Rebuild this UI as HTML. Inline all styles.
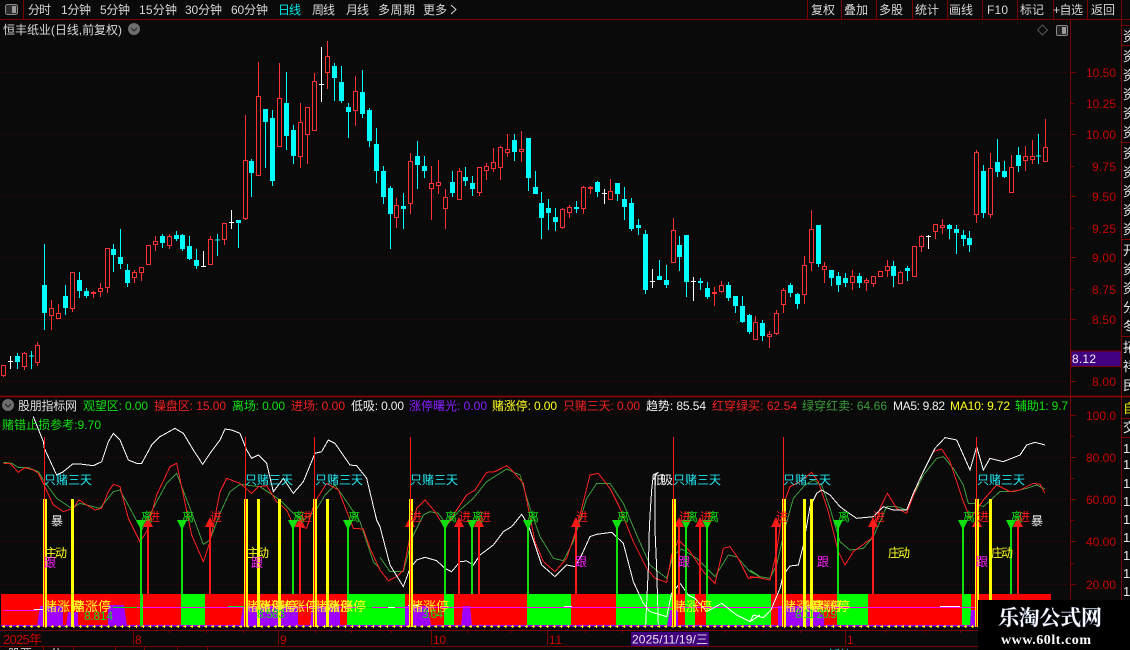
<!DOCTYPE html>
<html lang="zh"><head><meta charset="utf-8"><title>恒丰纸业</title>
<style>
html,body{margin:0;padding:0;background:#0a0a0b;width:1130px;height:650px;overflow:hidden}
svg{display:block}
text{font-family:"Liberation Sans","WenQuanYi Zen Hei","Noto Sans CJK SC",sans-serif;font-size:12px}
.tb text{fill:#d8d8d8;font-size:12px}
.ax text{fill:#c80000;font-size:12px}
.lb text{font-size:12px}
.rc text{fill:#e8e8e8;font-size:13px}
</style></head><body>
<svg width="1130" height="650" viewBox="0 0 1130 650" xmlns="http://www.w3.org/2000/svg">
<rect width="1130" height="650" fill="#0a0a0b"/>
<!-- grid -->
<g stroke="#640000" stroke-width="1" stroke-dasharray="1 3" fill="none">
<path d="M1 72.5H1068M1 134.5H1068M1 196.5H1068M1 257.5H1068M1 319.5H1068M1 381.5H1068"/>
<path d="M1 457.5H1068M1 499.5H1068M1 541.5H1068M1 584.5H1068"/>
</g>
<!-- toolbar -->
<g stroke="#7a0000" stroke-width="1" fill="none">
<path d="M0 19.5H1130M23.5 0V19M807.5 0V19M841.5 0V19M876.5 0V19M912.5 0V19M947.5 0V19M982.5 0V19M1017.5 0V19M1053.5 0V19M1087.5 0V19M1121.5 0V19"/>
<path d="M1070.5 20V646M1121.5 20V646"/>
<path d="M0 396.5H1130" stroke="#900000" stroke-width="1.4"/>
<path d="M1122 25.5H1130M1122 45.5H1130M1122 142.5H1130M1122 239.5H1130M1122 336.5H1130M1122 418.5H1130M1122 437.5H1130"/>
<path d="M0 630.5H1130M0 646.5H1130"/>
<path d="M43.5 646V650M73.5 646V650M115.5 646V650M144.5 646V650M177.5 646V650M207.5 646V650M133.5 630V645M278.5 630V645M431.5 630V645M547.5 630V645M845.5 630V645"/>
<path d="M169.5 630V633M206.5 630V633M243.5 630V633M315.5 630V633M351.5 630V633M391.5 630V633M467.5 630V633M510.5 630V633M585.5 630V633M622.5 630V633M725.5 630V633M762.5 630V633M800.5 630V633M885.5 630V633M925.5 630V633M960.5 630V633"/>
<path d="M1071 72.5H1076M1071 103.5H1074M1071 134.5H1076M1071 166.5H1074M1071 196.5H1076M1071 228.5H1074M1071 257.5H1076M1071 289.5H1074M1071 319.5H1076M1071 381.5H1076M1071 415.5H1076M1071 436.5H1074M1071 457.5H1076M1071 478.5H1074M1071 499.5H1076M1071 520.5H1074M1071 541.5H1076M1071 563.5H1074M1071 584.5H1076"/>
</g>
<rect x="5.5" y="4.5" width="12" height="10" rx="2" fill="#2c2c2c" stroke="#8a8a8a"/><rect x="12" y="6" width="4" height="7" fill="#9a9a9a"/>
<g class="tb">
<text x="28" y="14" textLength="23">分时</text><text x="61" y="14" textLength="30">1分钟</text><text x="100" y="14" textLength="30">5分钟</text><text x="139" y="14" textLength="38">15分钟</text><text x="185" y="14" textLength="37">30分钟</text><text x="231" y="14" textLength="37">60分钟</text>
<text x="278" y="14" textLength="23" style="fill:#00e8e8">日线</text><text x="312" y="14" textLength="23">周线</text><text x="346" y="14" textLength="23">月线</text><text x="378" y="14" textLength="37">多周期</text><text x="423" y="14" textLength="24">更多</text>
<path d="M451 5l5 4.5-5 4.5" fill="none" stroke="#d8d8d8"/>
<text x="811" y="14" textLength="24">复权</text><text x="844" y="14" textLength="24">叠加</text><text x="879" y="14" textLength="24">多股</text><text x="915" y="14" textLength="24">统计</text><text x="949" y="14" textLength="24">画线</text><text x="987" y="14" textLength="21">F10</text><text x="1020" y="14" textLength="24">标记</text><text x="1053" y="14" textLength="30">+自选</text><text x="1091" y="14" textLength="24">返回</text>
<text x="3" y="34" textLength="119">恒丰纸业(日线,前复权)</text>
</g>
<circle cx="134" cy="29" r="6" fill="#6e6e6e"/><path d="M131 28l3 3 3-3" fill="none" stroke="#222"/>
<path d="M1042.5 25l5 5-5 5-5-5z" fill="none" stroke="#555"/>
<rect x="1056.5" y="25.5" width="11" height="10" rx="1.5" fill="#222" stroke="#8a8a8a"/><rect x="1062" y="27" width="4" height="7" fill="#9a9a9a"/>
<!-- candle wicks -->
<g fill="none" stroke-width="1" shape-rendering="crispEdges">
<path stroke="#00ffff" d="M17.5 353V369M31.5 351V369M29 356H34M44.5 244V330M65.5 285V315M79.5 272V298M86.5 288V298M113.5 244V272M120.5 229V269M127.5 264V287M162.5 234V248M176.5 231V241M182.5 234V251M189.5 236V260M196.5 249V269M217.5 234V256M215 240H220M238.5 220V248M251.5 159V197M265.5 109V168M272.5 110V186M286.5 72V150M293.5 125V164M334.5 63V101M341.5 66V103M348.5 103V138M362.5 70V118M369.5 108V147M376.5 128V183M383.5 166V204M390.5 186V249M403.5 193V229M417.5 141V189M424.5 156V178M452.5 171V197M465.5 167V186M472.5 176V196M514.5 134V161M528.5 138V191M535.5 171V194M541.5 192V239M548.5 199V230M555.5 208V231M576.5 201V213M597.5 181V197M617.5 183V201M624.5 187V220M631.5 198V231M638.5 219V235M645.5 230V294M659.5 260V280M666.5 265V288M679.5 236V271M686.5 235V297M700.5 278V290M707.5 282V299M728.5 282V301M735.5 296V313M742.5 296V323M749.5 314V334M762.5 320V341M790.5 283V297M797.5 293V309M818.5 225V267M831.5 270V286M838.5 272V292M845.5 273V287M859.5 273V288M893.5 261V287M907.5 266V281M949.5 224V239M956.5 225V254M963.5 230V246M969.5 231V252M983.5 165V218M997.5 139V177M1004.5 161V178M1018.5 147V172M1038.5 134V164M1036 156H1041"/>
<path stroke="#ffffff" d="M10.5 356V369M8 361.5H13M203.5 251V267M201 266.5H206M231.5 210V229M229 222.5H234M321.5 47V102M319 84.5H324M604.5 189V204M602 193.5H607M652.5 269V288M650 281.5H655M693.5 277V301M691 281.5H696M928.5 235V249M926 236.5H931"/>
<path stroke="#ff3333" d="M3.5 365V377M24.5 352V370M37.5 342V366M51.5 300V330M58.5 304V319M72.5 272V312M93.5 291V298M100.5 283V297M107.5 248V293M134.5 270V283M141.5 267V281M155.5 236V251M169.5 234V249M210.5 236V265M224.5 223V245M245.5 115V220M258.5 62V176M279.5 63V147M300.5 103V168M307.5 107V164M314.5 73V131M327.5 41V89M355.5 76V126M396.5 198V228M410.5 153V214M431.5 166V220M438.5 160V194M445.5 189V229M459.5 168V200M479.5 167V196M486.5 163V180M493.5 148V172M500.5 146V180M507.5 134V157M521.5 131V162M562.5 208V229M569.5 205V218M583.5 186V214M590.5 186V194M610.5 179V200M673.5 218V263M714.5 287V306M721.5 281V293M755.5 316V340M769.5 331V348M776.5 310V335M783.5 288V313M804.5 256V304M811.5 210V271M824.5 262V283M852.5 270V290M866.5 278V291M873.5 276V287M887.5 260V277M900.5 271V284M921.5 235V252M935.5 224V239M942.5 219V234M976.5 150V223M990.5 153V218M1011.5 155V193M1025.5 146V171M1032.5 140V164M1045.5 119V162"/>
<path fill="#0a0a0b" stroke="#ff3333" d="M1.5 365.5H5.5V375.5H1.5zM22.5 353.5H26.5V366.5H22.5zM35.5 345.5H39.5V362.5H35.5zM49.5 308.5H53.5V315.5H49.5zM56.5 313.5H60.5V318.5H56.5zM70.5 272.5H74.5V308.5H70.5zM98.5 288.5H102.5V291.5H98.5zM105.5 248.5H109.5V287.5H105.5zM132.5 272.5H136.5V277.5H132.5zM139.5 267.5H143.5V272.5H139.5zM146.5 245.5H150.5V264.5H146.5zM153.5 241.5H157.5V244.5H153.5zM167.5 236.5H171.5V245.5H167.5zM208.5 239.5H212.5V264.5H208.5zM222.5 223.5H226.5V239.5H222.5zM243.5 160.5H247.5V218.5H243.5zM256.5 96.5H260.5V175.5H256.5zM277.5 98.5H281.5V146.5H277.5zM298.5 122.5H302.5V156.5H298.5zM305.5 107.5H309.5V134.5H305.5zM312.5 81.5H316.5V130.5H312.5zM325.5 56.5H329.5V72.5H325.5zM353.5 91.5H357.5V110.5H353.5zM394.5 205.5H398.5V217.5H394.5zM408.5 161.5H412.5V203.5H408.5zM429.5 183.5H433.5V188.5H429.5zM436.5 182.5H440.5V185.5H436.5zM443.5 197.5H447.5V208.5H443.5zM457.5 171.5H461.5V199.5H457.5zM477.5 167.5H481.5V192.5H477.5zM484.5 166.5H488.5V170.5H484.5zM491.5 162.5H495.5V168.5H491.5zM498.5 147.5H502.5V167.5H498.5zM505.5 149.5H509.5V152.5H505.5zM519.5 149.5H523.5V151.5H519.5zM560.5 209.5H564.5V227.5H560.5zM567.5 207.5H571.5V212.5H567.5zM581.5 187.5H585.5V208.5H581.5zM608.5 191.5H612.5V199.5H608.5zM671.5 230.5H675.5V262.5H671.5zM719.5 285.5H723.5V291.5H719.5zM753.5 322.5H757.5V339.5H753.5zM767.5 334.5H771.5V336.5H767.5zM774.5 313.5H778.5V333.5H774.5zM781.5 290.5H785.5V304.5H781.5zM802.5 265.5H806.5V294.5H802.5zM809.5 229.5H813.5V262.5H809.5zM822.5 266.5H826.5V269.5H822.5zM850.5 276.5H854.5V282.5H850.5zM864.5 280.5H868.5V282.5H864.5zM871.5 276.5H875.5V283.5H871.5zM878.5 271.5H882.5V276.5H878.5zM885.5 266.5H889.5V270.5H885.5zM898.5 272.5H902.5V283.5H898.5zM912.5 246.5H916.5V276.5H912.5zM919.5 236.5H923.5V246.5H919.5zM933.5 224.5H937.5V231.5H933.5zM940.5 225.5H944.5V227.5H940.5zM974.5 152.5H978.5V214.5H974.5zM988.5 168.5H992.5V214.5H988.5zM1009.5 167.5H1013.5V192.5H1009.5zM1023.5 156.5H1027.5V160.5H1023.5zM1030.5 156.5H1034.5V159.5H1030.5zM1043.5 147.5H1047.5V161.5H1043.5z"/>
<path fill="#ff3333" stroke="none" d="M91 292h5v2h-5zM588 187h5v2h-5zM712 292h5v2h-5z"/>
<path fill="#00ffff" stroke="none" d="M15 356h5V362h-5zM42 285h5V313h-5zM63 296h5V308h-5zM77 280h5V291h-5zM84 291h5V296h-5zM111 249h5V255h-5zM118 257h5V264h-5zM125 270h5V283h-5zM160 236h5V243h-5zM174 235h5V239h-5zM180 235h5V249h-5zM187 246h5V259h-5zM194 260h5V266h-5zM236 220h5V223h-5zM249 161h5V173h-5zM263 109h5V122h-5zM270 118h5V181h-5zM284 103h5V136h-5zM291 130h5V156h-5zM332 66h5V78h-5zM339 82h5V101h-5zM346 107h5V112h-5zM360 92h5V114h-5zM367 110h5V141h-5zM374 144h5V171h-5zM381 171h5V197h-5zM388 188h5V214h-5zM401 206h5V209h-5zM415 156h5V165h-5zM422 166h5V171h-5zM450 182h5V193h-5zM463 177h5V181h-5zM470 183h5V189h-5zM512 140h5V152h-5zM526 138h5V178h-5zM533 187h5V194h-5zM539 203h5V218h-5zM546 208h5V213h-5zM553 217h5V222h-5zM574 207h5V209h-5zM595 182h5V192h-5zM615 183h5V194h-5zM622 199h5V207h-5zM629 203h5V229h-5zM636 225h5V228h-5zM643 234h5V290h-5zM657 276h5V280h-5zM664 280h5V285h-5zM677 245h5V257h-5zM684 235h5V282h-5zM698 281h5V283h-5zM705 288h5V297h-5zM726 285h5V298h-5zM733 296h5V306h-5zM740 306h5V322h-5zM747 315h5V332h-5zM760 323h5V336h-5zM788 285h5V293h-5zM795 294h5V304h-5zM816 225h5V264h-5zM829 270h5V278h-5zM836 276h5V285h-5zM843 278h5V283h-5zM857 276h5V283h-5zM891 266h5V276h-5zM905 268h5V271h-5zM947 225h5V229h-5zM954 229h5V233h-5zM961 235h5V239h-5zM967 238h5V245h-5zM981 171h5V213h-5zM995 162h5V172h-5zM1002 171h5V177h-5zM1016 155h5V166h-5z"/>
</g>
<!-- axis labels -->
<g class="ax">
<text x="1086" y="77" textLength="30">10.50</text><text x="1086" y="108" textLength="30">10.25</text><text x="1086" y="139" textLength="30">10.00</text>
<text x="1092" y="171" textLength="24">9.75</text><text x="1092" y="201" textLength="24">9.50</text><text x="1092" y="233" textLength="24">9.25</text><text x="1092" y="262" textLength="24">9.00</text><text x="1092" y="294" textLength="24">8.75</text><text x="1092" y="324" textLength="24">8.50</text><text x="1092" y="386" textLength="24">8.00</text>
<text x="1086" y="420" textLength="30">100.0</text><text x="1086" y="462" textLength="30">80.00</text><text x="1086" y="504" textLength="30">60.00</text><text x="1086" y="546" textLength="30">40.00</text><text x="1086" y="589" textLength="30">20.00</text>
<text x="3" y="644" textLength="39" style="font-size:13px">2025年</text><text x="135" y="644">8</text><text x="280" y="644">9</text><text x="433" y="644" textLength="13">10</text><text x="549" y="644" textLength="13">11</text><text x="847" y="644">1</text>
</g>
<rect x="1071" y="351" width="50" height="15.5" fill="#400080" stroke="#7a0000"/>
<text x="1072" y="363" textLength="24" fill="#f0f0f0">8.12</text>
<!-- right column -->
<g class="rc">
<text x="1123" y="41">资</text>
<text x="1123" y="61">资</text><text x="1123" y="80">资</text><text x="1123" y="99">资</text><text x="1123" y="118">资</text><text x="1123" y="137">资</text>
<text x="1123" y="158">资</text><text x="1123" y="177">资</text><text x="1123" y="196">资</text><text x="1123" y="215">资</text><text x="1123" y="234">资</text>
<text x="1123" y="255">开</text><text x="1123" y="274">资</text><text x="1123" y="293">资</text><text x="1123" y="312">分</text><text x="1123" y="331">冬</text>
<text x="1123" y="352">拓</text><text x="1123" y="371">祥</text><text x="1123" y="390">民</text>
<text x="1123" y="413" style="fill:#e8e800">自</text><text x="1123" y="432">交</text>
<text x="1123" y="453">1</text><text x="1123" y="469">1</text><text x="1123" y="488">1</text><text x="1123" y="506">1</text><text x="1123" y="524">1</text><text x="1123" y="542">1</text><text x="1123" y="560">1</text><text x="1123" y="578">1</text><text x="1123" y="596">1</text>
</g>
<!-- legend -->
<circle cx="8" cy="405" r="6" fill="#6e6e6e"/><path d="M5 404l3 3 3-3" fill="none" stroke="#222"/>
<g class="lb">
<text x="18" y="410" textLength="59" fill="#e0e0e0">股朋指标网</text>
<text x="83" y="410" textLength="65" fill="#10e010">观望区: 0.00</text>
<text x="154" y="410" textLength="72" fill="#f02020">操盘区: 15.00</text>
<text x="232" y="410" textLength="53" fill="#10e010">离场: 0.00</text>
<text x="291" y="410" textLength="54" fill="#f02020">进场: 0.00</text>
<text x="351" y="410" textLength="53" fill="#f0f0f0">低吸: 0.00</text>
<text x="409" y="410" textLength="78" fill="#8a20ff">涨停曙光: 0.00</text>
<text x="492" y="410" textLength="65" fill="#ffff20">赌涨停: 0.00</text>
<text x="563" y="410" textLength="77" fill="#f02020">只赌三天: 0.00</text>
<text x="646" y="410" textLength="60" fill="#f0f0f0">趋势: 85.54</text>
<text x="712" y="410" textLength="85" fill="#f02020">红穿绿买: 62.54</text>
<text x="802" y="410" textLength="85" fill="#3c9b3c">绿穿红卖: 64.66</text>
<text x="893" y="410" textLength="52" fill="#f0f0f0">MA5: 9.82</text>
<text x="950" y="410" textLength="60" fill="#ffff20">MA10: 9.72</text>
<text x="1015" y="410" textLength="53" fill="#10e010">辅助1: 9.7</text>
</g>
<!-- strip -->
<rect x="1" y="594" width="1050" height="32.5" fill="#ff0000"/>
<g fill="#00ff00">
<rect x="181" y="594" width="24" height="32"/><rect x="140" y="594" width="3" height="32"/><rect x="347" y="594" width="58" height="32"/><rect x="444" y="594" width="10" height="32"/><rect x="527" y="594" width="44" height="32"/><rect x="616" y="594" width="56" height="32"/><rect x="685" y="594" width="10" height="32"/><rect x="706" y="594" width="65" height="32"/><rect x="837" y="594" width="31" height="32"/><rect x="962" y="594" width="9" height="32"/>
</g>
<g fill="#a000ff">
<path d="M37 626L40 606H63V626zM66 626L68 612H78V626zM108 626V605H124L127 626zM240 626L243 606H298V626zM310 626L312 606H340V626zM405 626V606H428L431 626zM461 626L463 606H470L472 626zM667 626L670 610H678V626zM778 626V606H812L824 616V626zM970 626L971 610H977V626z"/>
</g>
<rect x="1" y="625" width="1050" height="1.5" fill="#a000ff"/>
<g fill="none" shape-rendering="crispEdges" stroke-width="1">
<path stroke="#ff00ff" d="M3 610.5H37M137 607.5H1051"/>
<path stroke="#00e000" d="M113 607.5H137M228 606.5H245M358 607.5H372"/>
<path stroke="#ffffff" d="M34 609.5H43M388 607.5H395M408 605.5H419M564 606.5H572M940 606.5H960"/>
</g>
<!-- indicator lines -->
<g fill="none" stroke-width="1" shape-rendering="crispEdges">
<g transform="translate(0 395) scale(.33333)">
<polyline vector-effect="non-scaling-stroke" stroke="#3c9b3c" points="10,202 35,205 55,217 85,218 115,230 130,255 170,310 215,340 240,325 300,340 340,290 360,285 390,340 425,405 470,320 500,265 530,235 570,340 610,448 630,435 660,355 690,290 720,268 780,275 840,315 880,355 910,375 945,350 975,300 1005,270 1040,320 1080,380 1120,500 1140,520"/>
<polyline vector-effect="non-scaling-stroke" stroke="#ff2020" points="10,205 30,205 55,232 75,218 100,225 115,235 130,265 160,330 190,350 220,340 237,315 260,330 285,345 305,340 325,290 340,268 360,275 385,370 420,440 440,410 470,300 510,215 530,205 550,300 575,420 610,500 630,440 660,290 680,250 720,265 755,295 775,275 800,272 830,320 860,345 880,390 920,400 945,320 980,265 1015,285 1060,400 1090,402 1110,460 1140,525"/>
<polyline vector-effect="non-scaling-stroke" stroke="#ffffff" points="100,65 130,140 133,160 170,240 190,230 218,207 240,207 280,212 305,200 325,140 340,115 360,135 385,195 410,205 425,205 455,150 480,125 525,100 550,115 580,165 608,208 630,175 660,135 675,102 695,105 720,115 740,165 755,190 775,180 800,205 820,290 850,250 880,295 910,260 945,175 965,170 985,135 1005,145 1050,210 1070,212 1100,250 1130,375 1140,395"/>
</g>
<g transform="translate(380 395) scale(.33333)">
<polyline vector-effect="non-scaling-stroke" stroke="#3c9b3c" points="0,487 30,530 70,530 100,420 130,360 150,350 175,355 200,390 240,345 280,310 320,260 380,222 420,240 450,340 480,425 520,490 550,497 580,440 620,310 650,265 690,265 730,325 770,420 810,510 860,550 880,480 905,462 950,490 1005,545 1045,480 1070,485 1110,530 1140,545"/>
<polyline vector-effect="non-scaling-stroke" stroke="#ff2020" points="0,525 25,557 50,545 70,525 95,400 110,340 135,315 165,350 195,400 220,360 260,300 285,285 320,232 345,230 380,212 395,225 430,265 465,440 490,500 525,530 560,490 590,400 630,240 655,235 690,280 720,340 760,440 800,520 825,550 860,562 875,480 895,435 930,470 970,530 1005,565 1030,460 1050,455 1075,490 1105,550 1140,545"/>
<polyline vector-effect="non-scaling-stroke" stroke="#ffffff" points="0,395 30,510 70,575 90,520 110,495 135,487 170,497 195,520 215,530 240,500 260,498 280,510 300,480 340,450 370,410 395,395 425,358 445,390 485,510 525,545 560,510 585,515 605,480 630,425 650,418 695,412 730,445 760,560 790,625 810,650 860,665 875,595 900,565 925,600 945,610 980,650 1025,625 1070,660 1110,680 1140,660"/>
<polyline vector-effect="non-scaling-stroke" stroke="#ffffff" points="797,690 805,520 808,400 811,345 815,285 820,240 835,232 825,240 825,300 825,405 830,520 835,690"/>
</g>
<g transform="translate(750 395) scale(.33333)">
<polyline vector-effect="non-scaling-stroke" stroke="#3c9b3c" points="0,525 30,545 60,550 80,510 105,400 130,310 165,270 190,255 215,270 240,340 270,440 300,465 340,460 370,425 410,335 440,335 470,345 520,240 560,190 580,185 610,220 640,270 655,325 680,325 700,335 750,290 790,290 830,280 860,270 885,282"/>
<polyline vector-effect="non-scaling-stroke" stroke="#ff2020" points="0,545 25,548 60,555 80,470 100,330 120,275 150,260 185,232 205,260 235,350 265,470 285,510 310,470 365,430 390,340 412,295 440,340 470,355 510,250 550,170 575,162 600,200 640,320 660,370 680,345 700,315 740,270 780,290 810,285 850,265 870,268 885,295"/>
<polyline vector-effect="non-scaling-stroke" stroke="#ffffff" points="0,680 10,660 40,668 63,645 90,580 100,540 120,513 145,510 160,450 180,335 200,295 215,285 240,300 270,335 290,350 320,370 370,365 400,335 430,345 470,345 490,295 520,230 555,160 585,128 620,135 640,180 660,225 680,155 700,225 720,190 760,200 810,180 830,150 855,142 885,150"/>
</g>
</g>
<!-- plus markers -->
<g stroke="#ffff00" fill="none">
<path d="M2 626.5H1051" stroke-dasharray="3 3.97"/>
<path d="M3.5 626.5H1051" stroke-width="3" stroke-dasharray="1 5.97"/>
</g>
<!-- arrows green -->
<g shape-rendering="crispEdges">
<path stroke="#10e010" stroke-width="2" d="M141 528V626M182 528V594M293 528V594M348 528V594M445 528V594M472 528V594M528 528V594M617 528V594M686 528V594M707 528V594M838 528V594M963 528V594M1011 528V594"/>
<path stroke="#ff1a1a" stroke-width="2" d="M148 524V594M210 524V594M300 524V594M410 524V594M459 524V594M479 524V594M576 524V594M679 524V594M700 524V594M776 524V594M873 524V594M977 524V594M1018 524V594"/>
</g>
<g fill="#10e010"><path d="M136 520h10l-5 10zM177 520h10l-5 10zM288 520h10l-5 10zM343 520h10l-5 10zM440 520h10l-5 10zM467 520h10l-5 10zM523 520h10l-5 10zM612 520h10l-5 10zM681 520h10l-5 10zM702 520h10l-5 10zM833 520h10l-5 10zM958 520h10l-5 10zM1006 520h10l-5 10z"/></g>
<g fill="#ff1a1a"><path d="M143 527h10l-5-10zM205 527h10l-5-10zM295 527h10l-5-10zM405 527h10l-5-10zM454 527h10l-5-10zM474 527h10l-5-10zM571 527h10l-5-10zM674 527h10l-5-10zM695 527h10l-5-10zM771 527h10l-5-10zM868 527h10l-5-10zM972 527h10l-5-10zM1013 527h10l-5-10z"/></g>
<!-- yellow bars -->
<g fill="#ffff00">
<rect x="43" y="499" width="4" height="128"/><rect x="244" y="499" width="4" height="128"/><rect x="313" y="499" width="4" height="128"/><rect x="409" y="499" width="4" height="128"/><rect x="672" y="499" width="4" height="128"/><rect x="782" y="499" width="4" height="128"/><rect x="975" y="499" width="4" height="128"/>
<rect x="71" y="499" width="3" height="128"/><rect x="257" y="499" width="3" height="128"/><rect x="278" y="499" width="3" height="128"/><rect x="326" y="499" width="3" height="128"/><rect x="803" y="499" width="3" height="128"/><rect x="810" y="499" width="3" height="128"/><rect x="989" y="499" width="3" height="128"/>
</g>
<!-- thin red verticals -->
<g stroke="#ff1a1a" stroke-width="1" shape-rendering="crispEdges"><path d="M44.5 437V627M245.5 437V627M314.5 437V627M410.5 437V627M673.5 437V627M783.5 437V627M976.5 437V627"/></g>
<!-- labels -->
<g class="lb">
<text x="2" y="429" textLength="99" fill="#10e010">赌错止损参考:9.70</text>
<g fill="#22e8f0">
<text x="44" y="484" textLength="48">只赌三天</text><text x="245" y="484" textLength="48">只赌三天</text><text x="315" y="484" textLength="48">只赌三天</text><text x="410" y="484" textLength="48">只赌三天</text><text x="673" y="484" textLength="48">只赌三天</text><text x="783" y="484" textLength="48">只赌三天</text><text x="977" y="484" textLength="48">只赌三天</text>
</g>
<text x="653" y="484" textLength="20" fill="#f0f0f0">低吸</text>
<g fill="#f0f0f0"><text x="51" y="525">暴</text><text x="1031" y="525">暴</text></g>
<g fill="#ffff20"><text x="45" y="557" textLength="22">主动</text><text x="247" y="557" textLength="22">主动</text><text x="888" y="557" textLength="22">庄动</text><text x="991" y="557" textLength="22">庄动</text></g>
<g fill="#ff20ff"><text x="44" y="567">跟</text><text x="251" y="567">跟</text><text x="575" y="566">跟</text><text x="678" y="566">跟</text><text x="817" y="566">跟</text><text x="976" y="566">跟</text></g>
<g fill="#10e010"><text x="141" y="521">离</text><text x="182" y="521">离</text><text x="293" y="521">离</text><text x="348" y="521">离</text><text x="445" y="521">离</text><text x="472" y="521">离</text><text x="527" y="521">离</text><text x="617" y="521">离</text><text x="686" y="521">离</text><text x="707" y="521">离</text><text x="838" y="521">离</text><text x="963" y="521">离</text><text x="1011" y="521">离</text></g>
<g fill="#ff1a1a"><text x="148" y="521">进</text><text x="210" y="521">进</text><text x="300" y="521">进</text><text x="410" y="521">进</text><text x="459" y="521">进</text><text x="479" y="521">进</text><text x="576" y="521">进</text><text x="679" y="521">进</text><text x="700" y="521">进</text><text x="776" y="521">进</text><text x="873" y="521">进</text><text x="977" y="521">进</text><text x="1018" y="521">进</text></g>
<g fill="#ffff20">
<text x="44" y="611" style="font-size:13px">赌涨停</text><text x="72" y="611" style="font-size:13px">赌涨停</text>
<text x="245" y="611" style="font-size:13px">赌涨停</text><text x="258" y="611" style="font-size:13px">赌涨停</text><text x="279" y="611" style="font-size:13px">赌涨停</text><text x="314" y="611" style="font-size:13px">赌涨停</text><text x="327" y="611" style="font-size:13px">赌涨停</text>
<text x="410" y="611" style="font-size:13px">赌涨停</text><text x="673" y="611" style="font-size:13px">赌涨停</text>
<text x="783" y="611" style="font-size:13px">赌涨停</text><text x="804" y="611" style="font-size:13px">赌涨停</text><text x="811" y="611" style="font-size:13px">赌涨停</text>
</g>
<g fill="#10e010"><text x="84" y="620" textLength="29">8.814</text><text x="257" y="618" textLength="28">8.583</text><text x="422" y="618" textLength="21">3.64</text><text x="795" y="618" textLength="42">8.11 20.9</text></g>
</g>
<!-- date box -->
<rect x="631" y="632" width="78" height="14" fill="#400080"/>
<text x="632" y="643.5" textLength="76" fill="#e8e8e8">2025/11/19/三</text>
<!-- bottom fragments -->
<g fill="#e0e0e0" style="font-size:12px"><text x="8" y="658">股票</text><text x="50" y="658">分</text><text x="828" y="659" fill="#00e8e8">板块</text></g>
<!-- watermark -->
<rect x="978" y="600" width="152" height="50" fill="#000"/>
<text x="998" y="625" textLength="104" fill="#fff" style="font-family:'Noto Serif CJK SC','Noto Sans CJK SC',serif;font-size:21px;font-weight:700;stroke:#8a9ac0;stroke-width:.3">乐淘公式网</text>
<text x="1001" y="644" textLength="90" fill="#fff" style="font-family:'Liberation Serif',serif;font-size:14px;font-weight:700">www.60lt.com</text>
</svg>
</body></html>
